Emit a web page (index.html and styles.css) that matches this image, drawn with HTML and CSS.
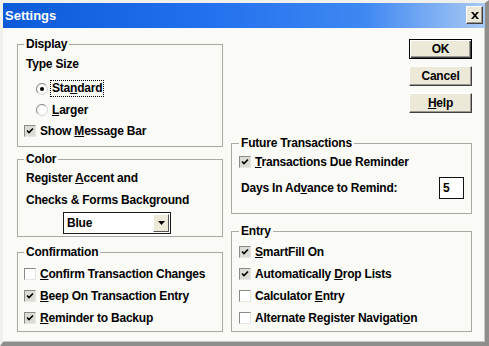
FILE: index.html
```html
<!DOCTYPE html>
<html>
<head>
<meta charset="utf-8">
<title>Settings</title>
<link rel="stylesheet" href="styles.css">
</head>
<body>
<div class="window">
  <div class="titlebar">
    <span class="title">Settings</span>
    <span class="close"><svg width="8" height="7" viewBox="0 0 8 7"><path d="M0 0h2.2l1.8 2.2L5.8 0H8L5.1 3.5 8 7H5.8L4 4.8 2.2 7H0l2.9-3.5z" fill="#000"/></svg></span>
  </div>
  <div class="content">
    <div class="col left">
      <div class="group g-display">
        <div class="gtitle">Display</div>
        <div class="row text first"><span>Type Size</span></div>
        <div class="row radio-row gap-top">
          <svg class="radio" width="12" height="12" viewBox="0 0 12 12"><circle cx="6" cy="6" r="5.5" fill="#fff" stroke="#d6d6d2"/><path d="M2.1 9.9A5.5 5.5 0 0 1 9.9 2.1" fill="none" stroke="#8a8a8a"/><circle cx="6" cy="6" r="2" fill="#000"/></svg>
          <span class="focus">Sta<u>n</u>dard</span>
        </div>
        <div class="row radio-row">
          <svg class="radio" width="12" height="12" viewBox="0 0 12 12"><circle cx="6" cy="6" r="5.5" fill="#fff" stroke="#d6d6d2"/><path d="M2.1 9.9A5.5 5.5 0 0 1 9.9 2.1" fill="none" stroke="#8a8a8a"/></svg>
          <span class="rlabel"><u>L</u>arger</span>
        </div>
        <div class="row">
          <span class="cb on"><svg width="10" height="10" viewBox="0 0 10 10"><path d="M2 4.5l2 2 4-4" fill="none" stroke="#000" stroke-width="1.6"/></svg></span>
          <span>Show <u>M</u>essage Bar</span>
        </div>
      </div>

      <div class="group g-color">
        <div class="gtitle">Color</div>
        <div class="row tall text first-c"><span>Register <u>A</u>ccent and</span></div>
        <div class="row tall text"><span>Checks &amp; Forms Background</span></div>
        <div class="select">
          <span class="sel-text">Blue</span>
          <span class="sel-btn"><svg width="7" height="4" viewBox="0 0 7 4"><path d="M0 0h7L3.5 4z" fill="#000"/></svg></span>
        </div>
      </div>

      <div class="group g-confirm">
        <div class="gtitle">Confirmation</div>
        <div class="row tall first-e">
          <span class="cb"></span>
          <span><u>C</u>onfirm Transaction Changes</span>
        </div>
        <div class="row tall">
          <span class="cb on"><svg width="10" height="10" viewBox="0 0 10 10"><path d="M2 4.5l2 2 4-4" fill="none" stroke="#000" stroke-width="1.6"/></svg></span>
          <span><u>B</u>eep On Transaction Entry</span>
        </div>
        <div class="row tall">
          <span class="cb on"><svg width="10" height="10" viewBox="0 0 10 10"><path d="M2 4.5l2 2 4-4" fill="none" stroke="#000" stroke-width="1.6"/></svg></span>
          <span><u>R</u>eminder to Backup</span>
        </div>
      </div>
    </div>

    <div class="col right">
      <div class="buttons">
        <div class="btn default">OK</div>
        <div class="btn">Cancel</div>
        <div class="btn"><span><u>H</u>elp</span></div>
      </div>

      <div class="group g-future">
        <div class="gtitle">Future Transactions</div>
        <div class="row first-f">
          <span class="cb on"><svg width="10" height="10" viewBox="0 0 10 10"><path d="M2 4.5l2 2 4-4" fill="none" stroke="#000" stroke-width="1.6"/></svg></span>
          <span><u>T</u>ransactions Due Reminder</span>
        </div>
        <div class="row days">
          <span class="text">Days In Ad<u>v</u>ance to Remind:</span>
          <span class="num">5</span>
        </div>
      </div>

      <div class="group g-entry">
        <div class="gtitle">Entry</div>
        <div class="row tall first-n">
          <span class="cb on"><svg width="10" height="10" viewBox="0 0 10 10"><path d="M2 4.5l2 2 4-4" fill="none" stroke="#000" stroke-width="1.6"/></svg></span>
          <span><u>S</u>martFill On</span>
        </div>
        <div class="row tall">
          <span class="cb on"><svg width="10" height="10" viewBox="0 0 10 10"><path d="M2 4.5l2 2 4-4" fill="none" stroke="#000" stroke-width="1.6"/></svg></span>
          <span>Automatically <u>D</u>rop Lists</span>
        </div>
        <div class="row tall">
          <span class="cb"></span>
          <span>Calculator <u>E</u>ntry</span>
        </div>
        <div class="row tall">
          <span class="cb"></span>
          <span>Alternate Register Navigati<u>o</u>n</span>
        </div>
      </div>
    </div>
  </div>
</div>
</body>
</html>
```

FILE: styles.css
```css
* { box-sizing: border-box; }

html, body {
  margin: 0;
  padding: 0;
}

body {
  width: 489px;
  height: 346px;
  overflow: hidden;
  font-family: "Liberation Sans", Arial, sans-serif;
  font-weight: bold;
  font-size: 12px;
  letter-spacing: -0.2px;
  color: #000;
  background: #fafaf7;
}

.window {
  width: 489px;
  height: 346px;
  background: #fafaf7;
  border-style: solid;
  border-width: 3px 4px 4px 3px;
  border-color: #f0f0ec #8e8e8a #8e8e8a #f0f0ec;
  box-shadow: inset -1px -1px 0 #c8c8c4;
  display: flex;
  flex-direction: column;
}

.titlebar {
  flex: none;
  height: 25px;
  display: flex;
  align-items: flex-start;
  justify-content: space-between;
  padding: 0 2px 0 2px;
  background: linear-gradient(to right, #0b5ad8 0%, #2472ee 45%, #3f88f2 75%, #a9c9f4 100%);
}

.title {
  color: #fff;
  font-size: 13px;
  line-height: 25px;
  letter-spacing: 0;
}

.close {
  margin-top: 3px;
  width: 17px;
  height: 18px;
  background: #ece9d8;
  border: 1px solid;
  border-color: #fff #404040 #404040 #fff;
  box-shadow: inset -1px -1px 0 #9a9890;
  display: flex;
  align-items: center;
  justify-content: center;
}

.content {
  flex: 1;
  display: flex;
  gap: 8px;
  padding: 11px 0 0 14px;
}

.col {
  display: flex;
  flex-direction: column;
}

.left {
  width: 206px;
  padding-top: 5px;
}

.right {
  width: 241px;
}

.group {
  border: 1px solid #a9a8a2;
  display: flex;
  flex-direction: column;
  padding-left: 6px;
}

.right .group {
  padding-left: 7px;
}

.gtitle {
  margin-top: -8px;
  height: 14px;
  line-height: 14px;
  padding: 0 2px;
  width: max-content;
  background: #fafaf7;
}

.row {
  height: 21px;
  display: flex;
  align-items: center;
  gap: 4px;
  white-space: nowrap;
}

.row.tall {
  height: 22px;
}

.text {
  padding-left: 2px;
}

/* Display */
.g-display { height: 103px; }
.first { margin-top: 2px; }
.gap-top { margin-top: 4px; }
.radio-row { padding-left: 12px; gap: 2px; }
.radio { flex: none; }
.focus {
  border: 1px dotted #000;
  height: 17px;
  line-height: 15px;
  padding: 0 1px;
}
.rlabel { padding-left: 2px; }

/* Color */
.g-color { height: 78px; margin-top: 12px; }
.first-c { margin-top: 1px; }

.select {
  margin-top: 1px;
  margin-left: 39px;
  width: 108px;
  height: 22px;
  border: 1px solid #1a1a1a;
  background: #fff;
  display: flex;
  align-items: center;
  justify-content: space-between;
  padding: 1px;
}

.sel-text { padding-left: 2px; }

.sel-btn {
  width: 16px;
  height: 18px;
  background: #ece9d8;
  border: 1px solid;
  border-color: #fff #555 #555 #fff;
  display: flex;
  align-items: center;
  justify-content: center;
}

/* Confirmation */
.g-confirm { height: 80px; margin-top: 15px; }
.first-e { margin-top: 4px; }

/* Checkbox */
.cb {
  flex: none;
  width: 12px;
  height: 12px;
  background: #fff;
  border: 1px solid;
  border-color: #8a8a86 #e6e6e2 #e6e6e2 #8a8a86;
  display: flex;
  align-items: center;
  justify-content: center;
}

.cb.on {
  background: #dcdcd6;
}

/* Buttons */
.buttons {
  display: flex;
  flex-direction: column;
  align-items: flex-end;
  gap: 7px;
}

.btn {
  width: 63px;
  height: 20px;
  background: #ece9d8;
  border: 1px solid;
  border-color: #fff #404040 #404040 #fff;
  box-shadow: inset -1px -1px 0 #9a9890;
  display: flex;
  align-items: center;
  justify-content: center;
}

.btn.default {
  border-color: #000;
  box-shadow: inset 1px 1px 0 #fff, inset -1px -1px 0 #404040, inset -2px -2px 0 #9a9890;
}

/* Future */
.g-future { height: 71px; margin-top: 30px; }
.first-f { margin-top: 1px; }
.days {
  margin-top: 4px;
  height: 23px;
  justify-content: space-between;
  padding-right: 7px;
}
.num {
  width: 25px;
  height: 22px;
  border: 1px solid #111;
  background: #fff;
  line-height: 20px;
  padding-left: 3px;
}

/* Entry */
.g-entry { height: 101px; margin-top: 17px; }
.first-n { margin-top: 3px; }
```
